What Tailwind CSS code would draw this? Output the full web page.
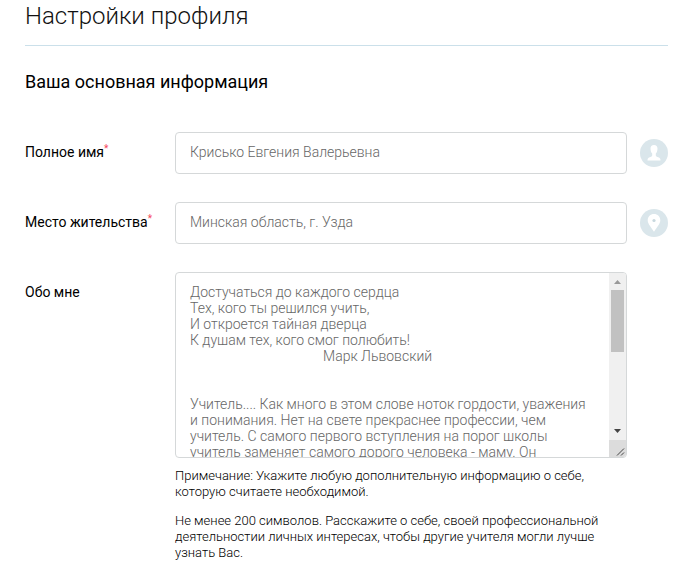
<!doctype html>
<html lang="ru">
  <head>
    <meta charset="UTF-8" />
    <meta name="viewport" content="width=device-width, initial-scale=1.0" />
    <title>Настройки профиля</title>
    <script src="https://cdn.jsdelivr.net/npm/@tailwindcss/browser@4"></script>
  </head>

  <body class="overflow-x-hidden bg-white pr-[15px] pl-[25px] font-[Roboto,sans-serif] text-sm text-black">
    <h1 class="border-b border-[#cbe0ea] pt-0.5 pb-3.5 text-2xl leading-[29px] font-light text-[#111]">
      Настройки профиля
    </h1>

    <form>
      <h2 class="pt-6 pb-[38px] text-lg leading-6">Ваша основная информация</h2>

      <div class="flex flex-col gap-7">
        <div class="flex items-center">
          <label for="name" class="w-[150px] shrink-0 pb-0.5">Полное имя<sup class="text-[10px] text-[#f5465a]">*</sup></label>
          <input
            id="name"
            type="text"
            value="Крисько Евгения Валерьевна"
            class="h-[42px] min-w-0 flex-1 rounded-sm border border-[#d5d8d9] px-3.5 pb-0.5 font-light text-[#666]"
          />
          <svg class="ml-[13px] size-7 shrink-0" viewBox="0 0 28 28" aria-hidden="true">
            <circle cx="14" cy="14" r="14" fill="#dae6eb" />
            <path
              fill="#fff"
              d="M14 6c-2.300 0-3.600 1.400-3.500 3.700.1 2.200.7 3.900 1.700 4.900v1.900c-.2 1-1.200 1.400-2.500 1.800-1.700.6-2.200 1.400-2.200 3.200h13c0-1.800-.5-2.600-2.200-3.200-1.300-.4-2.300-.8-2.500-1.800v-1.900c1-1 1.600-2.700 1.700-4.900.1-2.300-1.200-3.700-3.500-3.700z"
            />
          </svg>
        </div>

        <div class="flex items-center">
          <label for="city" class="w-[150px] shrink-0 pb-0.5">Место жительства<sup class="text-[10px] text-[#f5465a]">*</sup></label>
          <input
            id="city"
            type="text"
            value="Минская область, г. Узда"
            class="h-[42px] min-w-0 flex-1 rounded-sm border border-[#d5d8d9] px-3.5 pb-0.5 font-light text-[#666]"
          />
          <svg class="ml-[13px] size-7 shrink-0" viewBox="0 0 28 28" aria-hidden="true">
            <circle cx="14" cy="14" r="14" fill="#dae6eb" />
            <path
              fill="#fff"
              d="M14 5c-3.600 0-6.300 2.700-6.300 6.200 0 4 3.700 7 6.300 11.600 2.600-4.600 6.300-7.600 6.300-11.600 0-3.500-2.700-6.200-6.300-6.200z"
            />
            <circle cx="14" cy="11.500" r="1.600" fill="#c8d8de" />
          </svg>
        </div>

        <div class="flex items-start">
          <label for="about" class="w-[150px] shrink-0 pt-2.5">Обо мне</label>
          <div class="mr-[41px] min-w-0 flex-1">
            <div class="relative flex overflow-hidden rounded-sm border border-[#d5d8d9]">
              <textarea
                id="about"
                class="h-[184px] w-full resize-none overflow-hidden pt-[11px] pr-8 pl-3.5 leading-4 font-light text-[#666]"
              >
Достучаться до каждого сердца
Тех, кого ты решился учить,
И откроется тайная дверца
К душам тех, кого смог полюбить!
                                       Марк Львовский


Учитель.... Как много в этом слове ноток гордости, уважения и понимания. Нет на свете прекраснее профессии, чем учитель. С самого первого вступления на порог школы учитель заменяет самого дорого человека - маму. Он</textarea
              >
              <!-- scrollbar -->
              <div class="absolute inset-y-0 right-0 flex w-[17px] flex-col bg-[#f0f0f0]" aria-hidden="true">
                <svg class="h-[17px] w-full shrink-0" viewBox="0 0 17 17">
                  <path fill="#999" d="M8.500 7L12 11H5z" />
                </svg>
                <div class="ml-0.5 h-[62px] w-[13px] bg-[#c1c1c1]"></div>
                <svg class="mt-auto h-[17px] w-full shrink-0" viewBox="0 0 17 17">
                  <path fill="#444" d="M5 6h7l-3.500 4z" />
                </svg>
                <svg class="h-[17px] w-full shrink-0 bg-[#dcdcdc]" viewBox="0 0 17 17">
                  <path stroke="#444" d="M8 15.500l7-7M12 15.500l3-3" />
                </svg>
              </div>
            </div>
            <div class="flex flex-col gap-[13px] pt-2.5 text-[13px] leading-4 font-light text-black">
              <p>Примечание: Укажите любую дополнительную информацию о себе, которую считаете необходимой.</p>
              <p>
                Не менее 200 символов. Расскажите о себе, своей профессиональной деятельностии личных интересах,
                чтобы другие учителя могли лучше узнать Вас.
              </p>
            </div>
          </div>
        </div>
      </div>
    </form>
  </body>
</html>
